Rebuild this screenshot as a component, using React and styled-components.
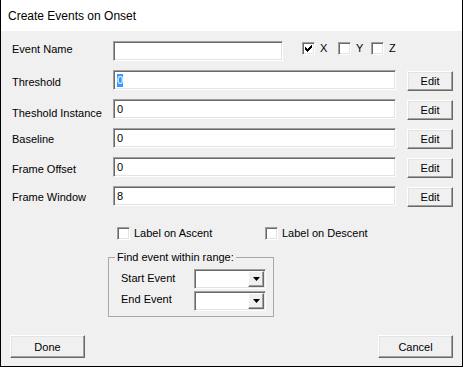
import React from 'react'
import styled, { createGlobalStyle } from 'styled-components'

const GlobalStyle = createGlobalStyle`
  body {
    margin: 0;
    background: #fff;
    font-family: "Liberation Sans", Arial, sans-serif;
  }
`

const Window = styled.div`
  width: 463px;
  height: 367px;
  box-sizing: border-box;
  border: 1px solid #000;
  border-top: none;
  display: flex;
  flex-direction: column;
  overflow: hidden;
`

const TitleBar = styled.div`
  height: 31px;
  flex-shrink: 0;
  background: #fff;
  display: flex;
  align-items: center;
  padding-left: 7px;
  font-size: 12px;
  color: #000;
`

const Body = styled.div`
  flex: 1;
  background: #f0f0f0;
  padding: 10px 9px 8px 11px;
  display: flex;
  flex-direction: column;
  font-size: 11px;
  color: #000;
`

const Row = styled.div`
  display: flex;
  align-items: flex-start;
  height: 20px;
  margin-bottom: 9px;
`

const Label = styled.div`
  width: 101px;
  flex-shrink: 0;
  line-height: 13px;
  padding-top: ${p => p.$drop}px;
  white-space: nowrap;
`

const Field = styled.div`
  width: ${p => p.$w}px;
  height: 20px;
  box-sizing: border-box;
  background: #fff;
  border: 1px solid;
  border-color: #a0a0a0 #fff #fff #a0a0a0;
  box-shadow: inset 1px 1px #696969, inset -1px -1px #e3e3e3;
  display: flex;
  align-items: center;
  padding-left: 3px;
  line-height: 13px;
`

const Selected = styled.span`
  background: #3399ff;
  color: #fff;
`

const Button = styled.button`
  box-sizing: border-box;
  width: ${p => p.$w || 75}px;
  height: ${p => p.$h || 23}px;
  padding: 0;
  background: #f0f0f0;
  border: 1px solid;
  border-color: #fff #696969 #696969 #fff;
  box-shadow: inset -1px -1px #a0a0a0, inset 1px 1px #e3e3e3;
  font-family: inherit;
  font-size: 11px;
  color: #000;
`

const EditButton = styled(Button)`
  margin-left: 11px;
  margin-top: 1px;
`

const AxisGroup = styled.div`
  display: flex;
  margin-left: 19px;
  margin-top: 1px;
`

const Option = styled.label`
  width: ${p => p.$w}px;
  display: flex;
  align-items: center;
  gap: ${p => p.$gap || 4}px;
  line-height: 13px;
  white-space: nowrap;
`

const Box = styled.span`
  width: 13px;
  height: 13px;
  box-sizing: border-box;
  flex-shrink: 0;
  background: #fff;
  border: 1px solid;
  border-color: #a0a0a0 #fff #fff #a0a0a0;
  box-shadow: inset 1px 1px #696969, inset -1px -1px #e3e3e3;
  display: flex;
  align-items: center;
  justify-content: center;
`

const OptionsRow = styled.div`
  display: flex;
  margin: 12px 0 0 105px;
`

const Group = styled.fieldset`
  margin: 11px 0 0 96px;
  padding: 0;
  width: 166px;
  box-sizing: border-box;
  border: 1px solid #a8a8a8;
  min-width: 0;
`

const Legend = styled.legend`
  margin-left: 6px;
  padding: 0 2px;
  line-height: 13px;
`

const GroupBody = styled.div`
  padding: 5px 0 5px 12px;
  display: flex;
  flex-direction: column;
  gap: 2px;
`

const ComboRow = styled.div`
  display: flex;
  align-items: center;
  height: 20px;
`

const ComboLabel = styled.div`
  width: 73px;
  line-height: 13px;
  margin-top: ${p => p.$lift}px;
`

const Combo = styled.div`
  width: 72px;
  height: 20px;
  box-sizing: border-box;
  background: #fff;
  border: 1px solid;
  border-color: #a0a0a0 #fff #fff #a0a0a0;
  box-shadow: inset 1px 1px #696969, inset -1px -1px #e3e3e3;
  padding: 1px;
  display: flex;
  justify-content: flex-end;
`

const ArrowButton = styled.div`
  width: 16px;
  box-sizing: border-box;
  background: #f0f0f0;
  border: 1px solid;
  border-color: #fff #696969 #696969 #fff;
  box-shadow: inset -1px -1px #a0a0a0;
  display: flex;
  align-items: center;
  justify-content: center;
`

const Footer = styled.div`
  margin-top: auto;
  margin-left: -2px;
  display: flex;
  justify-content: space-between;
`

const Check = ({ on }) => (
  <Box>
    {on && (
      <svg width="7" height="7" viewBox="0 0 7 7">
        <path d="M0 2h1v1h1v1h1V3h1V2h1V1h1V0h1v3h-1v1h-1v1h-1v1h-1v1h-1V6H1V5H0z" fill="#000" />
      </svg>
    )}
  </Box>
)

const Arrow = () => (
  <svg width="7" height="4" viewBox="0 0 7 4">
    <path d="M0 0h7L3.5 4z" fill="#000" />
  </svg>
)

const rows = [
  { name: 'Threshold', value: '0', drop: 6, selected: true },
  { name: 'Theshold Instance', value: '0', drop: 8 },
  { name: 'Baseline', value: '0', drop: 5 },
  { name: 'Frame Offset', value: '0', drop: 6 },
  { name: 'Frame Window', value: '8', drop: 5 },
]

export default function App() {
  return (
    <>
      <GlobalStyle />
      <Window>
        <TitleBar>Create Events on Onset</TitleBar>
        <Body>
          <Row>
            <Label $drop={2}>Event Name</Label>
            <Field $w={170} />
            <AxisGroup>
              <Option $w={36} $gap={5}><Check on />X</Option>
              <Option $w={33} $gap={5}><Check />Y</Option>
              <Option $w={20} $gap={5}><Check />Z</Option>
            </AxisGroup>
          </Row>
          {rows.map(r => (
            <Row key={r.name}>
              <Label $drop={r.drop}>{r.name}</Label>
              <Field $w={284}>{r.selected ? <Selected>{r.value}</Selected> : r.value}</Field>
              <EditButton $w={46} $h={20}>Edit</EditButton>
            </Row>
          ))}
          <OptionsRow>
            <Option $w={148}><Check />Label on Ascent</Option>
            <Option $w={120}><Check />Label on Descent</Option>
          </OptionsRow>
          <Group>
            <Legend>Find event within range:</Legend>
            <GroupBody>
              <ComboRow>
                <ComboLabel $lift={-2}>Start Event</ComboLabel>
                <Combo><ArrowButton><Arrow /></ArrowButton></Combo>
              </ComboRow>
              <ComboRow>
                <ComboLabel $lift={-4}>End Event</ComboLabel>
                <Combo><ArrowButton><Arrow /></ArrowButton></Combo>
              </ComboRow>
            </GroupBody>
          </Group>
          <Footer>
            <Button>Done</Button>
            <Button>Cancel</Button>
          </Footer>
        </Body>
      </Window>
    </>
  )
}
